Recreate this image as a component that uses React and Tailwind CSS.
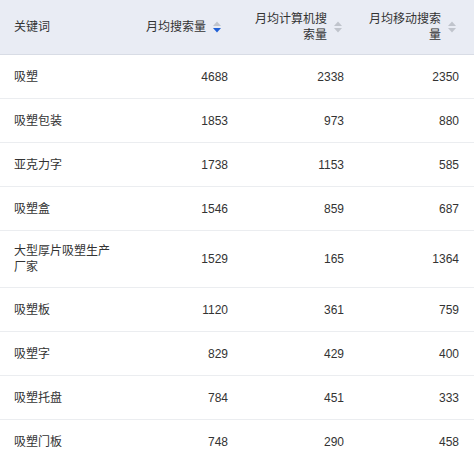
import React from "react";

const rows = [
  ["吸塑", 4688, 2338, 2350],
  ["吸塑包装", 1853, 973, 880],
  ["亚克力字", 1738, 1153, 585],
  ["吸塑盒", 1546, 859, 687],
  ["大型厚片吸塑生产厂家", 1529, 165, 1364],
  ["吸塑板", 1120, 361, 759],
  ["吸塑字", 829, 429, 400],
  ["吸塑托盘", 784, 451, 333],
  ["吸塑门板", 748, 290, 458],
];

function SortIcon({ active }) {
  return (
    <svg width="8" height="12" viewBox="0 0 8 12" className="shrink-0">
      <polygon points="0,5 4,0.5 8,5" fill="#c0c4cc" />
      <polygon points="0,7 4,11.5 8,7" fill={active ? "#1f5fd6" : "#c0c4cc"} />
    </svg>
  );
}

const font = {
  fontFamily:
    '"Liberation Sans", "Noto Sans CJK SC", sans-serif',
};

export default function App() {
  return (
    <div
      className="w-[474px] bg-white text-[12px] leading-[16px] text-[#333]"
      style={font}
    >
      <div className="grid grid-cols-[128px_114px_116px_116px] h-[55px] bg-[#e9ecf4] border-b border-[#d8dce5] box-border">
        <div className="flex items-center pl-[14px]">关键词</div>
        <div className="flex items-center justify-end gap-[7px] pr-[21px]">
          <span>月均搜索量</span>
          <SortIcon active />
        </div>
        <div className="flex items-center justify-end gap-[7px] pr-[16px]">
          <span className="text-right">
            月均计算机搜
            <br />
            索量
          </span>
          <SortIcon />
        </div>
        <div className="flex items-center justify-end gap-[7px] pr-[18px]">
          <span className="text-right">
            月均移动搜索
            <br />
            量
          </span>
          <SortIcon />
        </div>
      </div>
      {rows.map((r, i) => (
        <div
          key={i}
          className="grid grid-cols-[128px_114px_116px_116px] min-h-[44px] py-[12px] border-b border-[#ebedf0] box-border"
        >
          <div className="flex items-center pl-[14px]">
            <span className="max-w-[98px]">{r[0]}</span>
          </div>
          <div className="flex items-center justify-end pr-[14px]">{r[1]}</div>
          <div className="flex items-center justify-end pr-[14px]">{r[2]}</div>
          <div className="flex items-center justify-end pr-[15px]">{r[3]}</div>
        </div>
      ))}
    </div>
  );
}
